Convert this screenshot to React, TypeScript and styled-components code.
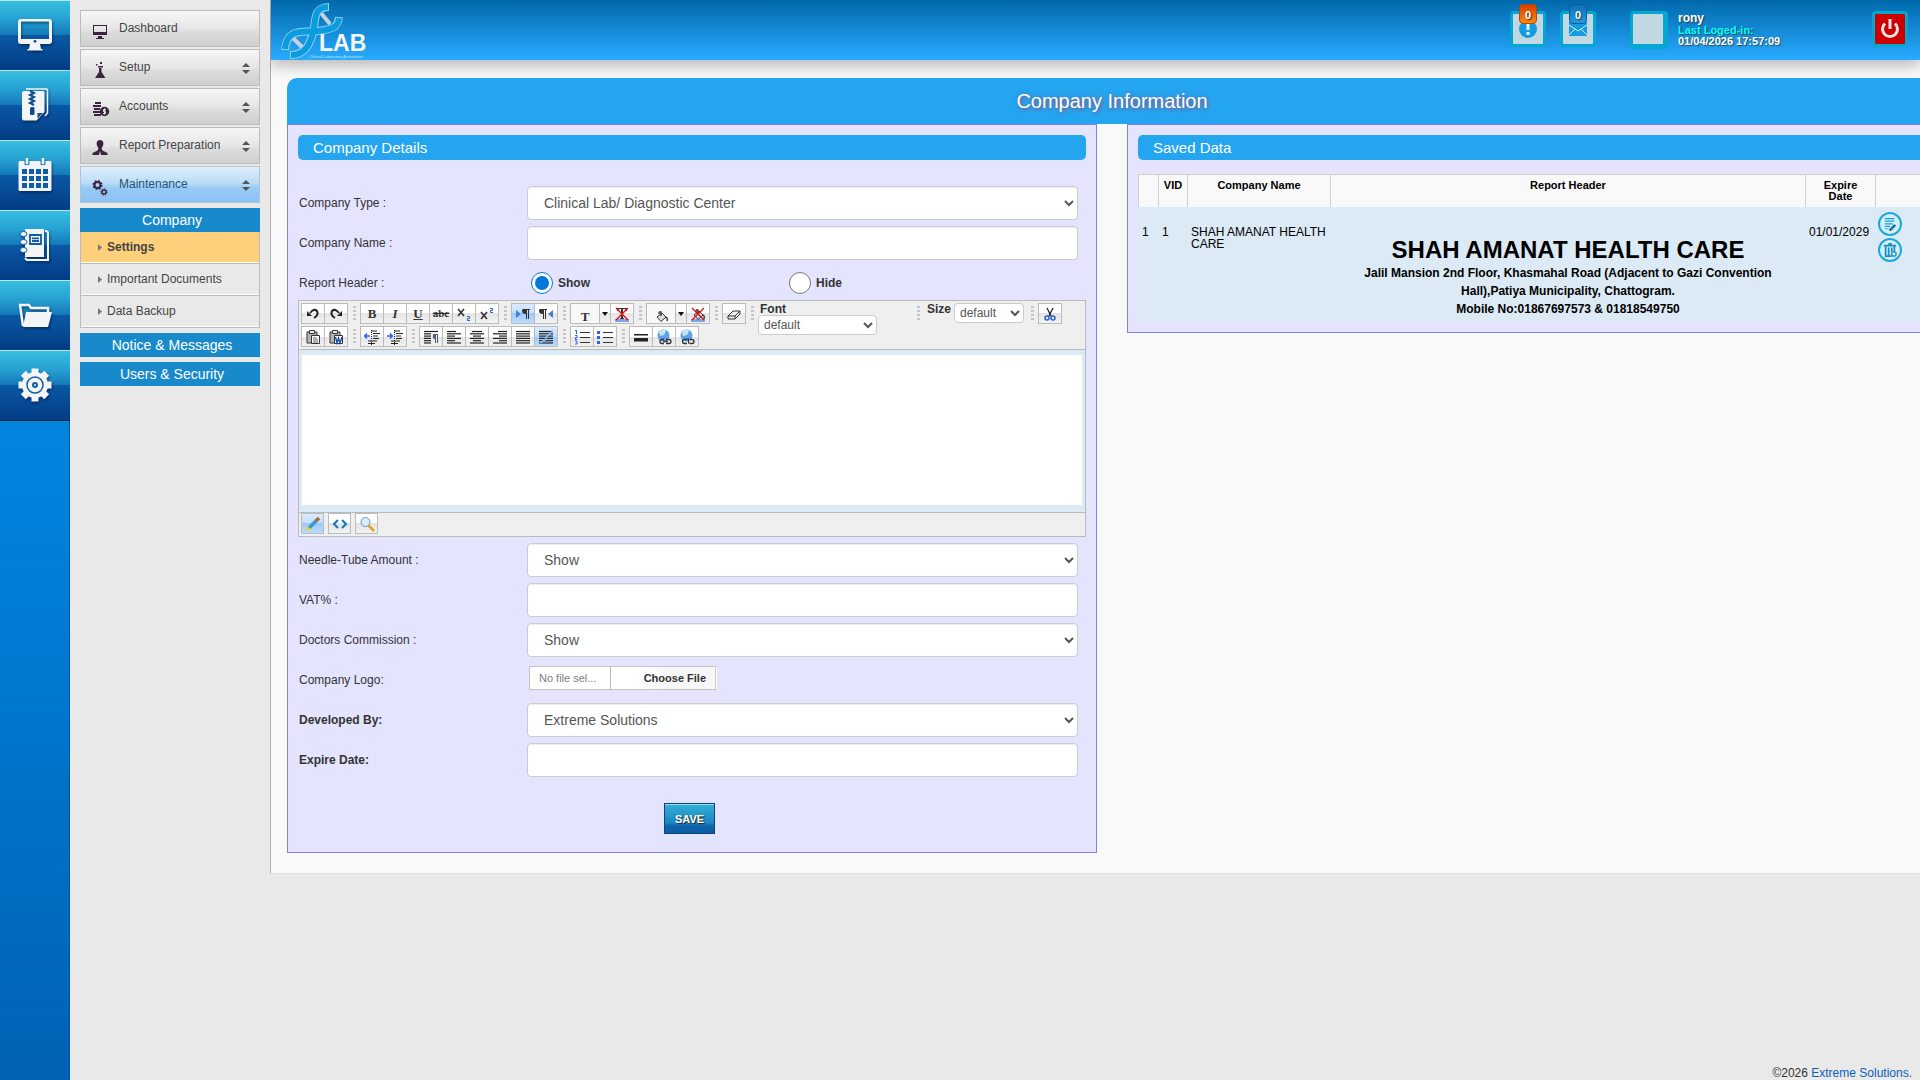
import React from "react";
import styled, { createGlobalStyle, css } from "styled-components";

const Global = createGlobalStyle`
  *, *::before, *::after { box-sizing: border-box; }
  body { margin: 0; background: #e9e9e9; color: #333; font: 12px/18px "Liberation Sans", Arial, sans-serif; overflow-x: hidden; }
  button, input, select, textarea { font-family: inherit; margin: 0; }
  a { text-decoration: none; color: inherit; }
  h1, h2, h3, p { margin: 0; font-weight: normal; }
  svg { display: block; flex: none; }
`;

/* ---------- frame ---------- */
const Page = styled.div`
  display: flex;
  min-height: 100vh;
`;
const Rail = styled.nav`
  flex: none;
  width: 70px;
  border-right: 1px solid #14508a;
  background: linear-gradient(#0a94ea, #0083dd 45%, #0062b4);
`;
const RailLink = styled.a`
  display: flex;
  align-items: center;
  justify-content: center;
  width: 70px;
  height: 70px;
  padding-bottom: 2px;
  border-top: 1px solid #bfe6f5;
  background: linear-gradient(#37bfe0, #27a3d3 25%, #1477b8 50%, #0a58a5 50%, #033c85);
  &:last-child { height: 71px; border-bottom: 1px solid #062244; }
  svg { filter: drop-shadow(1px 2px 1px rgba(0, 20, 60, 0.5)); }
`;
const Sidebar = styled.aside`
  flex: none;
  width: 200px;
  padding: 10px;
`;
const Menu = styled.div`
  display: flex;
  flex-direction: column;
  gap: 2px;
`;
const MenuButton = styled.button<{ $active?: boolean }>`
  display: flex;
  align-items: center;
  height: 37px;
  padding: 0 9px;
  border: 1px solid #bbb;
  border-radius: 0;
  background: linear-gradient(#f6f6f6, #e6e6e6 50%, #dcdcdc 60%, #cfcfcf);
  color: #444;
  font-size: 12px;
  text-align: left;
  span { flex: 1; padding-left: 9px; padding-bottom: 2px; }
  ${(p) => p.$active && css`
    border-color: #a9c6d6;
    background: linear-gradient(#e0effa, #bcdcf6 45%, #98caf6 60%, #8cc3f5);
    color: #1a5578;
  `}
`;
const Section = styled.h2`
  height: 24px;
  margin-top: 5px;
  padding-left: 4px;
  background: #188acc;
  color: #fff;
  font-size: 14px;
  line-height: 24px;
  text-align: center;
`;
const SubMenu = styled.div`
  border: 1px solid #bbb;
  border-top: 0;
`;
const SubLink = styled.a<{ $active?: boolean }>`
  display: flex;
  align-items: center;
  gap: 5px;
  height: 32px;
  padding-left: 17px;
  border-bottom: 1px solid #fff;
  color: #444;
  & + & { border-top: 1px solid #bbb; }
  &:first-child { height: 31px; }
  ${(p) => p.$active && css`background: #fed07b; font-weight: bold;`}
`;
const Column = styled.div`
  flex: 1;
  min-width: 0;
  display: flex;
  flex-direction: column;
  justify-content: space-between;
  overflow: hidden;
`;
const Main = styled.main`
  padding-bottom: 20px;
  border-left: 1px solid #b0b0b0;
  border-bottom: 1px solid #ddd;
  background: #f9f9f9;
`;
const Footer = styled.footer`
  padding: 0 8px;
  line-height: 13px;
  text-align: right;
  a { color: #0a62b8; }
`;

/* ---------- header ---------- */
const Header = styled.header`
  display: flex;
  justify-content: space-between;
  height: 60px;
  padding: 0 12px 0 8px;
  background: linear-gradient(#0068ab, #29abff);
  box-shadow: 0 5px 14px rgba(0, 0, 0, 0.28);
`;
const Account = styled.div`
  display: flex;
  align-items: flex-start;
  padding-top: 11px;
`;
const Tile = styled.button<{ $red?: boolean; $size?: number; $gap?: number }>`
  position: relative;
  display: flex;
  align-items: center;
  justify-content: center;
  width: ${(p) => p.$size || 36}px;
  height: ${(p) => p.$size || 36}px;
  margin-right: ${(p) => p.$gap || 0}px;
  padding: 0;
  border: 3px solid #04a6d2;
  border-width: ${(p) => (p.$size ? "3px 5px 5px 3px" : "3px")};
  border-radius: 4px;
  background: ${(p) => (p.$red ? "#c00" : "#c1d7e2")};
`;
const Badge = styled.span<{ $hot?: boolean }>`
  position: absolute;
  top: -10px;
  left: 6px;
  width: 18px;
  height: 20px;
  border: 1px solid ${(p) => (p.$hot ? "#b84a00" : "#0c5c92")};
  border-radius: 4px;
  background: ${(p) => (p.$hot ? "linear-gradient(#d83c00, #fb8a10)" : "linear-gradient(#0c70b4, #2299e4)")};
  color: #fff;
  font: bold 11px/20px "Liberation Sans", Arial, sans-serif;
  text-shadow: 1px 1px 1px #333;
`;
const User = styled.div`
  width: 194px;
  padding-top: 1px;
  color: #fff;
  font-size: 11px;
  font-weight: bold;
  line-height: 11px;
  text-shadow: 1px 1px 1px rgba(60, 40, 20, 0.7);
  strong { display: block; font-size: 12px; line-height: 13px; }
  em { display: block; color: #0ff; font-style: normal; font-weight: bold; }
`;

/* ---------- content ---------- */
const Content = styled.div`
  width: calc(100% + 17px);
  padding: 18px 0 0 16px;
`;
const PageTitle = styled.h1`
  height: 46px;
  border-radius: 10px 10px 0 0;
  background: #23a5f0;
  color: #fff;
  font-size: 20px;
  line-height: 46px;
  text-align: center;
  text-shadow: 1px 1px 4px #a04060;
`;
const Panels = styled.div`
  display: grid;
  grid-template-columns: 1fr 1fr;
  align-items: start;
  gap: 30px;
`;
const Panel = styled.section`
  min-width: 0;
  padding: 10px;
  border: 1px solid #8080f0;
  background: #e4e4ff;
`;
const PanelTitle = styled.h2`
  height: 25px;
  padding-left: 15px;
  border-radius: 5px;
  background: #23a5f0;
  color: #fff;
  font-size: 15px;
  line-height: 25px;
`;
const Form = styled.form`
  padding-top: 26px;
`;
const Row = styled.div<{ $tight?: boolean }>`
  display: grid;
  grid-template-columns: 228px 1fr;
  align-items: center;
  height: 34px;
  margin: 0 8px ${(p) => (p.$tight ? 0 : 6)}px 1px;
`;
const Label = styled.label<{ $bold?: boolean }>`
  font-weight: ${(p) => (p.$bold ? "bold" : "normal")};
`;
const control = css`
  width: 100%;
  height: 34px;
  padding: 6px 12px;
  border: 1px solid #ccc;
  border-radius: 4px;
  background-color: #fff;
  box-shadow: inset 0 1px 1px rgba(0, 0, 0, 0.075);
  color: #555;
  font-size: 14px;
`;
const Select = styled.select`${control}`;
const Input = styled.input`${control}`;
const Radios = styled.div`
  display: grid;
  grid-template-columns: 258px 1fr;
  padding-left: 4px;
`;
const RadioLabel = styled.label`
  display: flex;
  align-items: center;
  gap: 5px;
  font-weight: bold;
`;
const Radio = styled.input`
  appearance: none;
  width: 22px;
  height: 22px;
  padding: 3px;
  border: 1px solid #767676;
  border-radius: 50%;
  background: #fff;
  &:checked { border-color: #0078d7; }
  &:checked::before { content: ""; display: block; height: 14px; border-radius: 50%; background: #0078d7; }
`;
const FileLabel = styled.label`
  display: flex;
  justify-self: start;
  width: 188px;
  height: 24px;
  margin: 0 0 4px 2px;
  border: 1px solid #c4c4c4;
  border-right-color: #fff;
  background: #fff;
  color: #808080;
  font-size: 11px;
  line-height: 22px;
  span { width: 81px; padding-left: 9px; border-right: 1px solid #bbb; }
  b { flex: 1; padding-right: 9px; border-right: 1px solid #ccc; background: linear-gradient(90deg, #fff 20px, #f7f7f7 60px); color: #333; text-align: right; }
  input { position: absolute; width: 1px; height: 1px; opacity: 0; }
`;
const Actions = styled.div`
  display: flex;
  padding: 20px 0 8px 366px;
`;
const Save = styled.button`
  height: 31px;
  padding: 0 10px;
  border: 1px solid #0a4478;
  background: linear-gradient(#33b0d8, #1a86c2 65%, #0e66aa 75%, #0c5ca4);
  box-shadow: inset 0 1px 0 #9edcf0;
  color: #fff;
  font-size: 11px;
  font-weight: bold;
  text-shadow: 1px 1px 1px #222;
`;

/* ---------- rich text editor ---------- */
const Editor = styled.div`
  margin-bottom: 6px;
  border: 1px solid #bbb;
  background: #efefef;
`;
const Toolbar = styled.div`
  display: flex;
  align-items: flex-start;
  height: 48px;
  padding: 2px;
`;
const ToolRows = styled.div`
  display: flex;
  flex-direction: column;
  gap: 2px;
`;
const ToolRow = styled.div`
  display: flex;
  height: 21px;
`;
const Group = styled.div`
  display: flex;
  border-left: 1px solid #bbb;
`;
const Tool = styled.button<{ $w?: number; $on?: boolean; $low?: boolean; $small?: boolean }>`
  display: flex;
  align-items: center;
  justify-content: center;
  width: ${(p) => p.$w || 23}px;
  height: 21px;
  padding: ${(p) => (p.$low ? 5 : 0)}px 0 0;
  border: 1px solid #bbb;
  border-left: 0;
  background: ${(p) => (p.$on ? "linear-gradient(#dcebff, #c2dcff 50%, #9cc8ff 50%, #bcdcff)" : p.$low ? "#f8f8f8" : "linear-gradient(#fff 50%, #e4e4e4 50%, #f2f2f2)")};
  color: #333;
  font: bold ${(p) => (p.$small ? 11 : 13)}px/19px "Liberation Serif", serif;
`;
const Sep = styled.i`
  width: 3px;
  height: 15px;
  margin: 3px 4px 0 5px;
  background: repeating-linear-gradient(#c4c4c4 0 2px, transparent 2px 4px);
`;
const FontBox = styled.label`
  display: flex;
  flex-direction: column;
  width: 154px;
  font-weight: bold;
  line-height: 12px;
  span { padding-left: 2px; }
`;
const SizeBox = styled.label`
  display: flex;
  gap: 3px;
  padding: 0 2px 0 3px;
  font-weight: bold;
  line-height: 12px;
`;
const MiniSelect = styled.select<{ $w: number }>`
  width: ${(p) => p.$w}px;
  height: 20px;
  padding: 0 1px;
  border: 1px solid #ccc;
  border-radius: 4px;
  background-color: #fff;
  color: #555;
  font-size: 12px;
`;
const EditArea = styled.div`
  padding: 5px 3px 7px;
  border: solid #bbb;
  border-width: 1px 0;
  background: #dbeaf5;
  textarea { display: block; width: 100%; height: 150px; border: 0; background: #fff; resize: none; outline: 0; }
`;
const ModeBar = styled.div`
  display: flex;
  gap: 4px;
  height: 23px;
  padding: 0 2px;
  button { border-left: 1px solid #bbb; }
`;

/* ---------- table ---------- */
const Table = styled.table`
  width: 100%;
  margin-top: 14px;
  border-collapse: separate;
  border-spacing: 0;
  table-layout: fixed;
  color: #000;
  th { height: 33px; padding: 5px 2px 5px; border: solid #d0d0d0; border-width: 1px 0 0 1px; background: #f9f9f9; font-size: 11px; line-height: 11px; vertical-align: top; }
  th:nth-child(5) { padding: 5px 14px; }
  td { padding: 19px 3px 4px 4px; background: #dbeaf5; line-height: 12px; vertical-align: top; }
  td:last-child { padding: 5px 3px; }
`;
const HeaderText = styled.div`
  padding-top: 10px;
  font-weight: bold;
  line-height: 18px;
  text-align: center;
  h3 { font-size: 24px; font-weight: bold; line-height: 28px; }
  p { max-width: 440px; margin: 0 auto; font-weight: bold; }
`;
const RowActions = styled.div`
  display: flex;
  flex-direction: column;
  gap: 2px;
`;
const Round = styled.button`
  display: flex;
  align-items: center;
  justify-content: center;
  width: 24px;
  height: 24px;
  padding: 0;
  border: 2px solid #1aa9d8;
  border-radius: 50%;
  background: #d4effa;
`;

/* ---------- drawings ---------- */
const W = "#f2f4f6";
const railIcons = [
  { name: "Dashboard", d: <><path fillRule="evenodd" fill={W} d="M4 2h28a3 3 0 0 1 3 3v19a3 3 0 0 1-3 3H4a3 3 0 0 1-3-3V5a3 3 0 0 1 3-3zm0 2.500V22h28V4.500z" /><circle cx="18" cy="24.300" r="1.400" fill="#0a4e92" /><path fill={W} d="M13 27h10l1 5h1.500v1.500h-15V32H12z" /></> },
  { name: "Archive", d: <><path fill="none" stroke={W} strokeWidth="1.500" d="M9 2h20.500q1 0 1 1v23L28 29" /><path fill={W} d="M7 4h19.500q1 0 1 1v20l-8 8.500H7q-2 0-2-2V6q0-2 2-2z" /><path fill="#0a4e92" d="M20.500 31.500V26h5.500z" /><path fill="none" stroke="#0a4e92" strokeWidth="2" d="M13 4l4 2-4 2 4 2-4 2 4 2-4 2 4 2" /><rect x="13" y="20" width="4.500" height="8" rx="1.500" fill="#0a4e92" /></> },
  { name: "Calendar", d: <><path fillRule="evenodd" fill={W} d="M3 4h30q1.500 0 1.500 1.500v27q0 1.500-1.500 1.500H3q-1.500 0-1.500-1.500v-27Q1.500 4 3 4z" />{[12, 19, 26].map((y) => [5, 12, 19, 26].map((x) => <path key={x + "-" + y} fill="#0f5da6" d={`M${x} ${y}h5v5h-5z`} />))}<path fill="none" stroke="#1c84c0" strokeWidth="5" d="M10 3v5M26 3v5" /><path stroke={W} strokeWidth="2.500" d="M10 1v6M26 1v6" /></> },
  { name: "Notebook", d: <><path fill="none" stroke={W} strokeWidth="2" d="M28 4q3 0 3 2v27H10l-2-2" /><path fill={W} d="M8 2h19v28H8z" /><path fill="none" stroke="#0f5da6" strokeWidth="1.800" d="M13 8h11v9H13zM15 11.300h7M15 14h7" />{[7, 15, 23].map((y) => <ellipse key={y} cx="6.500" cy={y} rx="3.500" ry="2.500" fill={W} stroke="#0f5da6" />)}</> },
  { name: "Files", d: <><path fill="none" stroke={W} strokeWidth="2.500" d="M6 29L3 8h9l2 3h17v4" /><path fill={W} d="M9 15h26l-4 15H6z" /></> },
  { name: "Configuration", d: <><g stroke={W}>{[0, 45, 90, 135].map((a) => <path key={a} transform={`rotate(${a} 18 18)`} d="M18 1.500v33" strokeWidth="7" strokeLinecap="butt" />)}</g><circle cx="18" cy="18" r="13" fill={W} /><circle cx="18" cy="18" r="8" fill="none" stroke="#0f5da6" strokeWidth="1.500" /><circle cx="18" cy="18" r="3" fill="#0f5da6" /><circle cx="18" cy="18" r="1" fill={W} /></> },
];
const P = "#3b2340";
const menuItems = [
  { text: "Dashboard", d: <path fillRule="evenodd" fill={P} d="M1 2h14v10H1zm1 1v6h12V3zm4 10h4v2h2v1H4v-1h2z" /> },
  { text: "Setup", d: <path fill={P} d="M4 2h1.500v1.500H4zM8 0h2v2H8zM6 4h5v1.500H6zM7 6h2.500v4l4 6H3l4-6z" /> },
  { text: "Accounts", d: <><path stroke={P} strokeWidth="1.800" d="M3 2h6M1 5h8M2 8h6M1 11h7M2 14h7" /><circle cx="12.500" cy="10.500" r="4.700" fill={P} /><path fill="none" stroke="#e5e5e5" strokeWidth="1" d="M14 8.500h-2.500v2h2v2H11M12.500 7.500v6" /></> },
  { text: "Report Preparation", d: <path fill={P} d="M8 0c3 0 4 3 3 5.500L9.500 8.500l1 2 5 2.500v2H9L8 11l-1 4H.5v-2l5-2.500 1-2L5 5.500C4 3 5 0 8 0z" /> },
  { text: "Maintenance", d: <><circle cx="5.500" cy="6" r="3" fill="none" stroke={P} strokeWidth="2" /><circle cx="5.500" cy="6" r="4.300" fill="none" stroke={P} strokeWidth="1.500" strokeDasharray="1.800 1.570" /><circle cx="12" cy="13" r="2" fill="none" stroke={P} strokeWidth="1.500" /><circle cx="12" cy="13" r="3.200" fill="none" stroke={P} strokeWidth="1" strokeDasharray="1.300 1.210" /></> },
];

const Ico = ({ children, s = 16 }: { children: React.ReactNode; s?: number }) => (
  <svg width={s} height={s} viewBox="0 0 16 16" aria-hidden="true">{children}</svg>
);
const Lines = ({ rows, extra }: { rows: number[][]; extra?: React.ReactNode }) => (
  <Ico>
    {rows.map(([x, w], i) => <path key={i} stroke="#222" strokeWidth="1.200" d={`M${x} ${2.5 + i * 2.3}h${w}`} />)}
    {extra}
  </Ico>
);
const Caret = () => <svg width="6" height="4" viewBox="0 0 6 4"><path d="M0 0h6L3 4z" fill="#111" /></svg>;
const Cross = () => <path stroke="#e01010" strokeWidth="1.400" d="M2 2l12 12M14 2L2 14" />;
const Bucket = () => <><path fill="#ddd" stroke="#333" d="M4 9l5-4 4 4-5 4.500z" /><path fill="none" stroke="#333" strokeWidth="1.300" d="M8 8V4q-2-1-2 2M13 9q2 1 1 4" /></>;
const Clip = ({ children }: { children: React.ReactNode }) => <Ico><path fill="#b5b5b5" stroke="#333" d="M2 3h10v11H2z" /><path fill="#eee" stroke="#333" d="M4.500 1.500h5v3h-5z" /><path fill="#fff" stroke="#333" d="M6.500 6.500h8v8h-8z" />{children}</Ico>;
const Globe = ({ cut }: { cut?: boolean }) => <Ico><circle cx="7.500" cy="6.500" r="6" fill="#5da2e8" /><path fill="#c4e4fa" d="M3 3q4-4 7-1L8 6 4 7z" /><path fill="none" stroke="#333" strokeWidth="1.300" d={cut ? "M8 10.500H5.500a2 2 0 0 0 0 4H8M11 10.500h2a2 2 0 0 1 0 4h-2M9 9l1 6" : "M8 10.500h-2a2 2 0 0 0 0 4h2M10 10.500h3a2 2 0 0 1 0 4h-3M7 12.500h5"} /></Ico>;
const Indent = ({ right }: { right?: boolean }) => <Ico><path stroke="#222" strokeWidth="1.200" d="M7 2h6M9 4.500h7M9 7h5M9 9.500h6M4 12h9M4 14.500h7" /><path stroke="#222" strokeDasharray="1 1" d="M7.500 1v15" /><path fill="none" stroke="#2860ff" strokeWidth="1.500" d={right ? "M0 7h5M3 4.500L5.500 7 3 9.500" : "M6 7H1M3 4.500L.5 7 3 9.500"} /></Ico>;
const pil = <path fill="#333" d="M8 3h7v1h-1v9h-1V4h-1v9h-1V8Q7 8 7 5q0-2 1-2z" />;
const full = [[1, 14], [1, 14], [1, 14], [1, 14], [1, 14], [1, 14]];

const Logo = () => (
  <svg width="100" height="60" viewBox="0 0 100 60" role="img" aria-label="LAB Clinical Laboratory Automation">
    <path stroke="#c9d2dc" strokeWidth="4" d="M42 13l9 11M14 38l12 12" />
    <g fill="none">
      <path stroke="#8fd0ef" strokeWidth="8" d="M50 7C33 7 37 23 34 33S27 55 11 55" />
      <path stroke="#8fd0ef" strokeWidth="8" d="M6 50C8 27 25 33 39 31S59 28 60 17" />
      <path stroke="#0a9be0" strokeWidth="6" d="M49 7C33 7 37 23 34 33S27 55 12 55" />
      <path stroke="#0a9be0" strokeWidth="6" d="M6 49C8 27 25 33 39 31S59 28 60 18" />
    </g>
    <text x="40" y="51" fill="#f4f8fc" fontSize="23" fontWeight="bold" fontFamily="Liberation Sans, Arial, sans-serif">LAB</text>
    <text x="30" y="58" fill="#bfe3f8" fontSize="4" fontFamily="Liberation Sans, Arial, sans-serif">Clinical Laboratory Automation</text>
  </svg>
);

const T = (p: { label: string; w?: number; on?: boolean; low?: boolean; small?: boolean; children: React.ReactNode }) => (
  <Tool type="button" aria-label={p.label} $w={p.w} $on={p.on} $low={p.low} $small={p.small}>{p.children}</Tool>
);

const EditorBox = () => (
  <Editor>
    <Toolbar>
      <ToolRows>
        <ToolRow>
          <Group>
            <T label="Undo"><Ico><path fill="none" stroke="#222" strokeWidth="2" d="M5 7q4-5 7-2 2 4-3 7" /><path fill="#222" d="M2 5v5h5z" /></Ico></T>
            <T label="Redo"><Ico><path fill="none" stroke="#222" strokeWidth="2" d="M11 7q-4-5-7-2-2 4 3 7" /><path fill="#222" d="M14 5v5H9z" /></Ico></T>
          </Group>
          <Sep />
          <Group>
            <T label="Bold">B</T>
            <T label="Italic"><i>I</i></T>
            <T label="Underline"><u>U</u></T>
            <T label="Strikethrough" small><s>abc</s></T>
            <T label="Subscript"><Ico><path fill="none" stroke="#333" strokeWidth="1.600" d="M2 3l6 7M8 3l-6 7" /><path fill="none" stroke="#2860d0" d="M11 10.500h2.500v2H11.500v2H14" /></Ico></T>
            <T label="Superscript"><Ico><path fill="none" stroke="#333" strokeWidth="1.600" d="M2 6l6 7M8 6l-6 7" /><path fill="none" stroke="#2860d0" d="M11 2.500h2.500v2H11.500v2H14" /></Ico></T>
          </Group>
          <Sep />
          <Group>
            <T label="Left to right" on><Ico><path fill="#4a80d0" d="M1 4l5 4-5 4z" />{pil}</Ico></T>
            <T label="Right to left"><Ico><g transform="translate(-6 0)">{pil}</g><path fill="#4a80d0" d="M15 4l-5 4 5 4z" /></Ico></T>
          </Group>
          <Sep />
          <Group>
            <T label="Text color" w={29} low>T</T>
            <T label="Choose text color" w={11}><Caret /></T>
            <T label="Clear text color"><Ico><path fill="#7aa4f0" d="M1 13h14v3H1z" /><path fill="#333" d="M3 2h10v3h-1L11 3H9v9h1v1H6v-1h1V3H5L4 5H3z" /><Cross /></Ico></T>
          </Group>
          <Sep />
          <Group>
            <T label="Fill color" w={29} low><Ico><Bucket /></Ico></T>
            <T label="Choose fill color" w={11}><Caret /></T>
            <T label="Clear fill color"><Ico><path fill="#7aa4f0" d="M1 13h14v3H1z" /><Bucket /><Cross /></Ico></T>
          </Group>
          <Sep />
          <Group>
            <T label="Clear formatting"><Ico><path fill="#eee" stroke="#333" strokeLinejoin="round" d="M2 10l5-5h7l-5 5zM2 10v3h7v-3M9 13l5-5V5" /></Ico></T>
          </Group>
        </ToolRow>
        <ToolRow>
          <Group>
            <T label="Paste"><Clip><path stroke="#333" strokeWidth=".8" d="M8 9h4M8 11h5M8 13h5" /></Clip></T>
            <T label="Paste from Word"><Clip><path fill="none" stroke="#1c4fb0" strokeWidth="1.400" d="M7.500 8l1.500 6 1.500-5 1.500 5 2-6" /></Clip></T>
          </Group>
          <Sep />
          <Group>
            <T label="Decrease indent"><Indent /></T>
            <T label="Increase indent"><Indent right /></T>
          </Group>
          <Sep />
          <Group>
            <T label="Paragraph"><Lines rows={[[1, 14], [1, 7], [1, 7], [1, 7], [1, 7], [1, 7]]} extra={<path fill="#557" d="M10 5h5v9h-1V6h-1v8h-1v-4q-3 0-2-5z" />} /></T>
            <T label="Align left"><Lines rows={[[1, 9], [1, 14], [1, 8], [1, 14], [1, 8], [1, 14]]} /></T>
            <T label="Align center"><Lines rows={[[3, 10], [1, 14], [4, 8], [1, 14], [4, 8], [1, 14]]} /></T>
            <T label="Align right"><Lines rows={[[6, 9], [1, 14], [7, 8], [1, 14], [7, 8], [1, 14]]} /></T>
            <T label="Justify"><Lines rows={full} /></T>
            <T label="Remove alignment" on><Lines rows={full} extra={<path fill="none" stroke="#8cc0f4" strokeWidth="1.600" d="M2 14l5-3 2-4 6-5" />} /></T>
          </Group>
          <Sep />
          <Group>
            <T label="Ordered list"><Ico><path stroke="#333" d="M6 3.500h10M6 8.500h10M6 13.500h10" /><path fill="none" stroke="#2860ff" d="M1 1.500h1.500V5M1 6.500h2v2H1.500v2H3M1 12h2v3H1" /></Ico></T>
            <T label="Bullet list"><Ico><path stroke="#333" d="M6 3.500h10M6 8.500h10M6 13.500h10" /><path fill="#2860ff" d="M0 2h3v3H0zM0 7h3v3H0zM0 12h3v3H0z" /></Ico></T>
          </Group>
          <Sep />
          <Group>
            <T label="Horizontal rule"><Ico><path fill="#222" d="M1 5h14v1.500H1zM1 9h14v3.500H1z" /></Ico></T>
            <T label="Insert link"><Globe /></T>
            <T label="Remove link"><Globe cut /></T>
          </Group>
        </ToolRow>
      </ToolRows>
      <Sep />
      <FontBox>
        <span>Font</span>
        <MiniSelect $w={119}><option>default</option></MiniSelect>
      </FontBox>
      <Sep />
      <SizeBox>
        <span>Size</span>
        <MiniSelect $w={70}><option>default</option></MiniSelect>
      </SizeBox>
      <Sep />
      <Group>
        <T label="Cut"><Ico><path stroke="#222" strokeWidth="1.300" d="M5 2l4 8M11 2L7 10" /><g fill="none" stroke="#2860d0" strokeWidth="1.500"><circle cx="5" cy="12" r="2" /><circle cx="11" cy="12" r="2" /></g></Ico></T>
      </Group>
    </Toolbar>
    <EditArea><textarea aria-label="Report header text" /></EditArea>
    <ModeBar>
      <T label="Design" on><Ico><path stroke="#3a9ac0" strokeWidth="3.500" d="M4 12l8-8" /><path stroke="#b06a30" strokeWidth="3.500" d="M11 5l3-3" /><path fill="#f0d020" d="M1 15l1.500-5L6 13.500z" /></Ico></T>
      <T label="HTML"><Ico><path fill="none" stroke="#1a7cb8" strokeWidth="2.200" d="M6 4L2 8l4 4M10 4l4 4-4 4" /></Ico></T>
      <T label="Preview"><Ico><path stroke="#e0a020" strokeWidth="2.500" d="M9.500 9.500L15 15" /><circle cx="6.500" cy="6" r="4.500" fill="#d8ecfa" stroke="#6a9ab8" /></Ico></T>
    </ModeBar>
  </Editor>
);

const SelectRow = ({ id, label, value, bold }: { id: string; label: string; value: string; bold?: boolean }) => (
  <Row><Label htmlFor={id} $bold={bold}>{label}</Label><Select id={id}><option>{value}</option></Select></Row>
);
const InputRow = ({ id, label, bold }: { id: string; label: string; bold?: boolean }) => (
  <Row><Label htmlFor={id} $bold={bold}>{label}</Label><Input id={id} type="text" /></Row>
);

export default function App() {
  return (
    <Page>
      <Global />
      <Rail>
        {railIcons.map((r) => (
          <RailLink key={r.name} href="#" aria-label={r.name}>
            <svg width="36" height="36" viewBox="0 0 36 36">{r.d}</svg>
          </RailLink>
        ))}
      </Rail>
      <Sidebar>
        <Menu>
          {menuItems.map((m, i) => (
            <MenuButton key={m.text} type="button" $active={i === 4}>
              <svg width="20" height="22" viewBox="-2 -5 20 22">{m.d}</svg>
              <span>{m.text}</span>
              {i > 0 && <svg width="8" height="12" viewBox="0 0 8 12"><path fill="#555" d="M4 1l4 4H0zM0 8h8l-4 4z" /></svg>}
            </MenuButton>
          ))}
        </Menu>
        <Section>Company</Section>
        <SubMenu>
          {["Settings", "Important Documents", "Data Backup"].map((t, i) => (
            <SubLink key={t} href="#" $active={i === 0}>
              <svg width="4" height="7" viewBox="0 0 4 7"><path fill="#777" d="M0 0l4 3.500L0 7z" /></svg>{t}
            </SubLink>
          ))}
        </SubMenu>
        <Section>Notice &amp; Messages</Section>
        <Section>Users &amp; Security</Section>
      </Sidebar>
      <Column>
        <Main>
          <Header>
            <Logo />
            <Account>
              <Tile type="button" aria-label="Alerts" $gap={14}>
                <svg width="18" height="18" viewBox="0 0 18 18"><circle cx="9" cy="9" r="9" fill="#149be0" /><path stroke="#dff1fa" strokeWidth="3" d="M9 3v7M9 12v3" /></svg>
                <Badge $hot>0</Badge>
              </Tile>
              <Tile type="button" aria-label="Messages" $gap={34}>
                <svg width="18" height="14" viewBox="0 0 18 14"><path fill="#149be0" d="M0 0h18v14H0z" /><path fill="none" stroke="#cfeaf8" d="M0 3l9 6 9-6M0 13l6-6M18 13l-6-6" /></svg>
                <Badge>0</Badge>
              </Tile>
              <Tile type="button" aria-label="Profile" $size={38} $gap={10} />
              <User><strong>rony</strong><em>Last Loged-in:</em>01/04/2026 17:57:09</User>
              <Tile type="button" aria-label="Log out" $red>
                <svg width="20" height="20" viewBox="0 0 20 20"><path fill="none" stroke="#f0e4e4" strokeWidth="3" d="M5 4.500a7.500 7.500 0 1 0 10 0M10 0v10" /></svg>
              </Tile>
            </Account>
          </Header>
          <Content>
            <PageTitle>Company Information</PageTitle>
            <Panels>
              <Panel>
                <PanelTitle>Company Details</PanelTitle>
                <Form>
                  <SelectRow id="type" label="Company Type :" value="Clinical Lab/ Diagnostic Center" />
                  <InputRow id="name" label="Company Name :" />
                  <Row $tight>
                    <span>Report Header :</span>
                    <Radios>
                      <RadioLabel><Radio type="radio" name="header" defaultChecked />Show</RadioLabel>
                      <RadioLabel><Radio type="radio" name="header" />Hide</RadioLabel>
                    </Radios>
                  </Row>
                  <EditorBox />
                  <SelectRow id="needle" label="Needle-Tube Amount :" value="Show" />
                  <InputRow id="vat" label="VAT% :" />
                  <SelectRow id="commission" label="Doctors Commission :" value="Show" />
                  <Row>
                    <Label htmlFor="logo">Company Logo:</Label>
                    <FileLabel><span>No file sel...</span><b>Choose File</b><input id="logo" type="file" /></FileLabel>
                  </Row>
                  <SelectRow id="developer" label="Developed By:" value="Extreme Solutions" bold />
                  <InputRow id="expire" label="Expire Date:" bold />
                  <Actions><Save type="button">SAVE</Save></Actions>
                </Form>
              </Panel>
              <Panel>
                <PanelTitle>Saved Data</PanelTitle>
                <Table>
                  <colgroup>
                    <col width="20" /><col width="29" /><col width="143" /><col /><col width="70" /><col width="51" />
                  </colgroup>
                  <thead>
                    <tr><th /><th>VID</th><th>Company Name</th><th>Report Header</th><th>Expire Date</th><th /></tr>
                  </thead>
                  <tbody>
                    <tr>
                      <td>1</td>
                      <td>1</td>
                      <td>SHAH AMANAT HEALTH CARE</td>
                      <td>
                        <HeaderText>
                          <h3>SHAH AMANAT HEALTH CARE</h3>
                          <p>Jalil Mansion 2nd Floor, Khasmahal Road (Adjacent to Gazi Convention Hall),Patiya Municipality, Chattogram.</p>
                          <p>Mobile No:01867697573 &amp; 01818549750</p>
                        </HeaderText>
                      </td>
                      <td>01/01/2029</td>
                      <td>
                        <RowActions>
                          <Round type="button" aria-label="Edit"><Ico s={14}><path fill="#1a9fd4" d="M2 1h11v1.500H2zM2 4h11v1.500H2zM2 7h9v1.500H2zM2 10h6v1.500H2zM2 13h5v1H2z" /><path stroke="#1878a8" strokeWidth="3" d="M9 14l5-5" /><path fill="#222" d="M7 16l1-3 2 2z" /></Ico></Round>
                          <Round type="button" aria-label="Delete"><Ico s={14}><path fill="none" stroke="#1a8fc4" strokeWidth="2" d="M1 3h14M6 1h4M3 4v11h7M6.500 5v9M10 5v5M13 4v5" /><circle cx="12.500" cy="12.500" r="2.500" fill="#fff" stroke="#1a8fc4" strokeWidth="1.600" /></Ico></Round>
                        </RowActions>
                      </td>
                    </tr>
                  </tbody>
                </Table>
              </Panel>
            </Panels>
          </Content>
        </Main>
        <Footer>©2026 <a href="#">Extreme Solutions.</a></Footer>
      </Column>
    </Page>
  );
}
